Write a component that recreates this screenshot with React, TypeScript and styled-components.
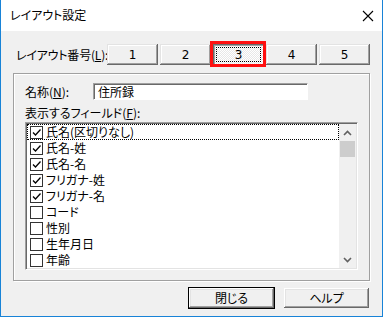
import React from 'react'
import styled, { createGlobalStyle } from 'styled-components';

const GlobalStyle = createGlobalStyle`
    html, body {
        margin:0;
        padding:0;
        background:#f0f0f0;
    }
    body {
        font-family:"Noto Sans CJK JP", "Noto Sans", sans-serif;
        font-size:12px;
        color:#000;
        font-feature-settings:"palt";
    }
`;

type Field = { _id: string, label: string, checked: boolean };

const fields: Field[] = [
    { _id: 'name', label: '氏名(区切りなし)', checked: true },
    { _id: 'last', label: '氏名-姓', checked: true },
    { _id: 'first', label: '氏名-名', checked: true },
    { _id: 'kanaLast', label: 'フリガナ-姓', checked: true },
    { _id: 'kanaFirst', label: 'フリガナ-名', checked: true },
    { _id: 'code', label: 'コード', checked: false },
    { _id: 'sex', label: '性別', checked: false },
    { _id: 'birth', label: '生年月日', checked: false },
    { _id: 'age', label: '年齢', checked: false },
]

const layoutNumbers = ['1', '2', '3', '4', '5'];

const App = () => {
    return (
        <Window>
            <GlobalStyle />
            <TitleBar>
                <Title>レイアウト設定</Title>
                <svg width="12" height="12" viewBox="0 0 12 12">
                    <path d="M1 1 L11 11 M11 1 L1 11" stroke="#000" strokeWidth="1.1" fill="none" />
                </svg>
            </TitleBar>
            <Body>
                <LayoutRow>
                    <LayoutLabel>レイアウト番号(<u>L</u>):</LayoutLabel>
                    <NumberGroup>
                        {layoutNumbers.map((n) => (
                            <NumberButton key={n} $pressed={n === '3'}>
                                {n === '3' ? <FocusText>{n}</FocusText> : n}
                                {n === '3' && <Highlight />}
                            </NumberButton>
                        ))}
                    </NumberGroup>
                </LayoutRow>
                <GroupBox>
                    <NameRow>
                        <NameLabel>名称(<u>N</u>):</NameLabel>
                        <NameInput>住所録</NameInput>
                    </NameRow>
                    <FieldLabel>表示するフィールド(<u>F</u>):</FieldLabel>
                    <ListBox>
                        <ListItems>
                            {fields.map((field, i) => (
                                <ListRow key={field._id} $focused={i === 0}>
                                    <CheckBox>
                                        {field.checked && (
                                            <svg width="11" height="11" viewBox="0 0 11 11">
                                                <path d="M2 5.5 L4.5 8 L9.5 2.5" stroke="#000" strokeWidth="1.3" fill="none" />
                                            </svg>
                                        )}
                                    </CheckBox>
                                    <span>{field.label}</span>
                                </ListRow>
                            ))}
                        </ListItems>
                        <ScrollBar>
                            <ScrollArrow>
                                <svg width="9" height="6" viewBox="0 0 9 6">
                                    <path d="M1 5 L4.5 1.5 L8 5" stroke="#606060" strokeWidth="1.6" fill="none" />
                                </svg>
                            </ScrollArrow>
                            <ScrollThumb />
                            <ScrollTrack />
                            <ScrollArrow>
                                <svg width="9" height="6" viewBox="0 0 9 6">
                                    <path d="M1 1 L4.5 4.5 L8 1" stroke="#606060" strokeWidth="1.6" fill="none" />
                                </svg>
                            </ScrollArrow>
                        </ScrollBar>
                    </ListBox>
                </GroupBox>
                <Footer>
                    <DialogButton $default>閉じる</DialogButton>
                    <DialogButton>ヘルプ</DialogButton>
                </Footer>
            </Body>
        </Window>
    )
}

const Window = styled.div`
    width:383px;
    height:317px;
    box-sizing:border-box;
    border:1px solid #1883d7;
    border-top:none;
    background:#f0f0f0;
    display:flex;
    flex-direction:column;
`;

const TitleBar = styled.div`
    height:31px;
    flex-shrink:0;
    background:#fff;
    display:flex;
    align-items:center;
    justify-content:space-between;
    padding:0 8px 0 9px;
`;

const Title = styled.div`
    font-size:12px;
    line-height:16px;
    margin-top:-1px;
`;

const Body = styled.div`
    flex:1;
    display:flex;
    flex-direction:column;
    padding:13px 12px 0 12px;
`;

const LayoutRow = styled.div`
    display:flex;
    align-items:center;
    height:21px;
`;

const LayoutLabel = styled.div`
    padding-left:3px;
    width:91px;
    flex-shrink:0;
    white-space:nowrap;
    letter-spacing:-0.2px;
    line-height:16px;
`;

const NumberGroup = styled.div`
    display:grid;
    grid-template-columns:repeat(5, 51px);
    column-gap:2px;
`;

const NumberButton = styled.div<{ $pressed?: boolean }>`
    position:relative;
    height:21px;
    display:flex;
    align-items:center;
    justify-content:center;
    font-family:"DejaVu Sans", sans-serif;
    font-size:12px;
    background:${p => p.$pressed
        ? 'repeating-conic-gradient(#ffffff 0 25%, #e8e8e8 0 50%) 0 0 / 2px 2px'
        : '#f0f0f0'};
    box-shadow:${p => p.$pressed
        ? 'inset 1px 1px #696969, inset 2px 2px #a0a0a0, inset -1px -1px #fff'
        : 'inset -1px -1px #696969, inset 1px 1px #e3e3e3, inset -2px -2px #a0a0a0, inset 2px 2px #fff'};
`;

const FocusText = styled.span`
    position:absolute;
    inset:3px 3px 3px 3px;
    border:1px dotted #000;
    display:flex;
    align-items:center;
    justify-content:center;
    padding-top:1px;
`;

const Highlight = styled.div`
    position:absolute;
    top:-3px;
    left:-3px;
    right:-2px;
    bottom:-2px;
    border:3px solid #ff1010;
`;

const GroupBox = styled.div`
    margin-top:8px;
    border:1px solid #a0a0a0;
    box-shadow:inset 1px 1px #fff, 1px 1px #fff;
    padding:9px 11px 10px 11px;
    display:flex;
    flex-direction:column;
`;

const NameRow = styled.div`
    display:flex;
    align-items:center;
    height:17px;
`;

const NameLabel = styled.div`
    width:68px;
    line-height:16px;
`;

const NameInput = styled.div`
    width:215px;
    height:17px;
    box-sizing:border-box;
    background:#fff;
    border-top:1px solid #a0a0a0;
    border-left:1px solid #a0a0a0;
    border-bottom:1px solid #fff;
    border-right:1px solid #fff;
    box-shadow:inset 1px 1px #696969;
    padding-left:4px;
    line-height:15px;
`;

const FieldLabel = styled.div`
    margin-top:5px;
    line-height:16px;
    height:17px;
`;

const ListBox = styled.div`
    height:148px;
    box-sizing:border-box;
    background:#fff;
    border-top:1px solid #a0a0a0;
    border-left:1px solid #a0a0a0;
    border-bottom:1px solid #fff;
    border-right:1px solid #fff;
    box-shadow:inset 1px 1px #696969, inset -1px -1px #e3e3e3;
    padding:1px 1px 1px 1px;
    display:flex;
`;

const ListItems = styled.div`
    flex:1;
    display:flex;
    flex-direction:column;
    overflow:hidden;
`;

const ListRow = styled.div<{ $focused?: boolean }>`
    height:16px;
    box-sizing:border-box;
    display:flex;
    align-items:center;
    gap:3px;
    padding-left:2px;
    border:1px dotted ${p => p.$focused ? '#000' : 'transparent'};
    line-height:14px;
`;

const CheckBox = styled.div`
    width:13px;
    height:13px;
    box-sizing:border-box;
    border:1px solid #333;
    background:#fff;
    display:flex;
    align-items:center;
    justify-content:center;
`;

const ScrollBar = styled.div`
    width:17px;
    background:#f0f0f0;
    display:flex;
    flex-direction:column;
`;

const ScrollArrow = styled.div`
    height:17px;
    display:flex;
    align-items:center;
    justify-content:center;
`;

const ScrollThumb = styled.div`
    height:16px;
    margin:0 1px;
    background:#cdcdcd;
`;

const ScrollTrack = styled.div`
    flex:1;
`;

const Footer = styled.div`
    margin-top:6px;
    display:flex;
    justify-content:flex-end;
    gap:8px;
`;

const DialogButton = styled.div<{ $default?: boolean }>`
    width:87px;
    height:22px;
    box-sizing:border-box;
    display:flex;
    align-items:center;
    justify-content:center;
    background:#f0f0f0;
    line-height:16px;
    border:1px solid ${p => p.$default ? '#000' : 'transparent'};
    box-shadow:inset -1px -1px #696969, inset 1px 1px #fff, inset -2px -2px #a0a0a0, inset 2px 2px #e3e3e3;
`;

export default App;
